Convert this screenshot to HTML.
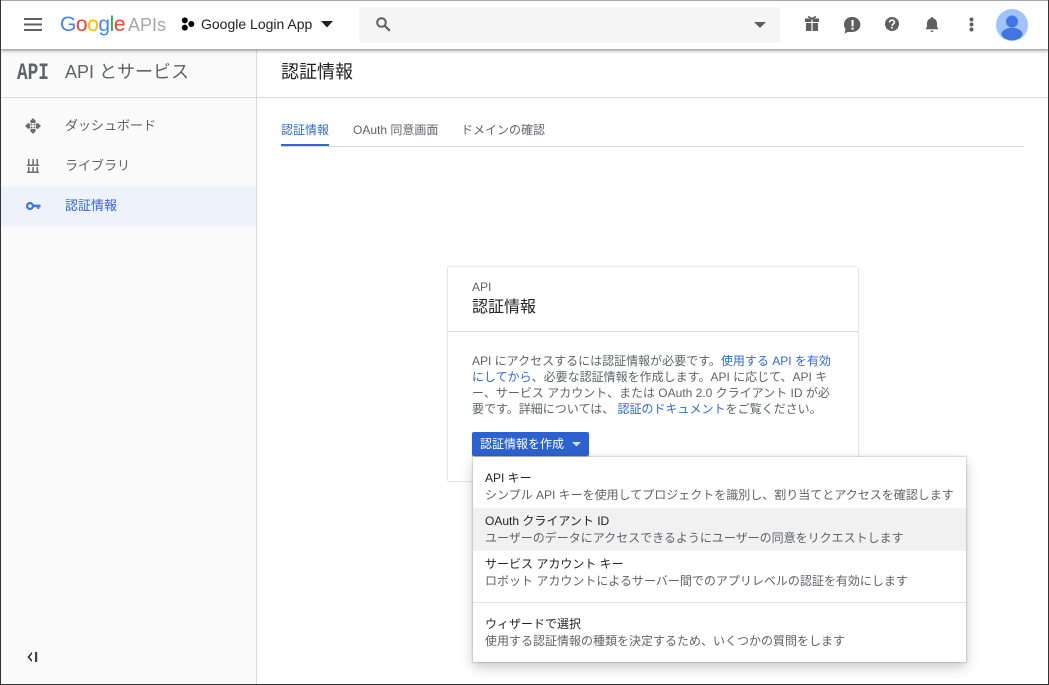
<!DOCTYPE html>
<html lang="ja"><head><meta charset="utf-8"><title>認証情報</title>
<style>
*{box-sizing:border-box}
html,body{margin:0;padding:0;width:1049px;height:685px;overflow:hidden;background:#fff}
body{font-family:"Liberation Sans","Noto Sans CJK JP",sans-serif;position:relative;color:#212121}
.a{position:absolute;white-space:nowrap}
svg{position:absolute;display:block}
.t{font-size:12px;line-height:16px;color:#000000de}
.s{font-size:12px;line-height:16px;color:#5f6368}
a{color:#3367d6;text-decoration:none}
</style></head><body>
<!-- sidebar -->
<div class="a" style="left:0;top:50px;width:257px;height:635px;background:#fafafa;border-right:1px solid #dadada"></div>
<div class="a" style="left:0;top:97px;width:1049px;height:1px;background:#dadada"></div>
<!-- header -->
<div class="a" style="left:0;top:0;width:1049px;height:49px;background:#fff;box-shadow:0 1px 4px rgba(0,0,0,.55)"></div>
<svg style="left:24px;top:18px" width="19" height="13"><path d="M0 0h18v2H0zM0 5.500h18v2H0zM0 11h18v2H0z" fill="#5f5f5f"/></svg>
<div class="a" style="left:60px;top:10px;font-size:21px;line-height:30px;letter-spacing:-.45px"><span style="color:#4285f4">G</span><span style="color:#ea4335">o</span><span style="color:#fbbc05">o</span><span style="color:#4285f4">g</span><span style="color:#34a853">l</span><span style="color:#ea4335">e</span><span style="color:#a6a6a6;margin-left:3px;font-size:18px;letter-spacing:0">APIs</span></div>
<svg style="left:181px;top:17px" width="14" height="14"><circle cx="3.800" cy="3.400" r="3" fill="#000"/><circle cx="3.800" cy="10.600" r="3" fill="#000"/><circle cx="10.300" cy="7" r="3" fill="#000"/></svg>
<div class="a" style="left:201px;top:15px;font-size:14px;line-height:18px;color:#212121">Google Login App</div>
<svg style="left:321px;top:21px" width="12" height="7"><path d="M0 0h12L6 6.500z" fill="#212121"/></svg>
<div class="a" style="left:359px;top:7px;width:421px;height:36px;background:#f5f5f5;border-radius:2px"></div>
<svg style="left:375px;top:16px" width="17" height="17" viewBox="0 0 17 17"><circle cx="6.500" cy="6.500" r="4.300" fill="none" stroke="#5f5f5f" stroke-width="2"/><path d="M9.800 9.800l5 5" stroke="#5f5f5f" stroke-width="2.200"/></svg>
<svg style="left:754px;top:22px" width="12" height="6"><path d="M0 0h12L6 6z" fill="#5f5f5f"/></svg>
<!-- gift -->
<svg style="left:804px;top:16px" width="16" height="16" viewBox="0 0 16 16" fill="#5f5f5f"><path d="M1 2.500h6.400v3.500H1zM8.600 2.500H15v3.500H8.600zM2 7h5.400v8H2zM8.600 7H14v8H8.600z"/><path d="M4 0.500l4 2.200 4-2.200" fill="none" stroke="#5f5f5f" stroke-width="1.600"/></svg>
<!-- feedback -->
<svg style="left:844px;top:17px" width="17" height="17" viewBox="0 0 17 17"><path d="M8.500 0a7.900 7.500 0 0 1 0 15H3.500L0.500 16.800 1.600 12A7.900 7.500 0 0 1 8.500 0z" fill="#5f5f5f"/><path d="M7.500 3h2.100v6.200H7.500zM7.500 10.500h2.100v2.100H7.500z" fill="#fff"/></svg>
<!-- help -->
<svg style="left:885px;top:17px" width="14" height="14" viewBox="0 0 14 14"><circle cx="7" cy="7" r="7" fill="#5f5f5f"/><path d="M4.500 5.400A2.500 2.300 0 0 1 9.500 5.300c0 1.700-2.500 1.700-2.500 3.500" fill="none" stroke="#fff" stroke-width="1.600"/><path d="M6.100 9.800h1.800v1.700H6.100z" fill="#fff"/></svg>
<!-- bell -->
<svg style="left:925px;top:16px" width="14" height="17" viewBox="0 0 14 17" fill="#5f5f5f"><path d="M7 1a1.200 1.200 0 0 1 1.200 1.200A5 5 0 0 1 12 7v4l1.300 1.600v.7H.7v-.7L2 11V7a5 5 0 0 1 3.800-4.800A1.200 1.200 0 0 1 7 1zM5.500 14.500h3a1.500 1.500 0 0 1-3 0z"/></svg>
<svg style="left:969px;top:17px" width="5" height="15" fill="#5f5f5f"><circle cx="2.500" cy="2.500" r="2"/><circle cx="2.500" cy="7.500" r="2"/><circle cx="2.500" cy="12.500" r="2"/></svg>
<svg style="left:996px;top:9px" width="32" height="32" viewBox="0 0 32 32"><circle cx="16" cy="16" r="16" fill="#a0c3ff"/><g fill="#4375e0"><circle cx="16" cy="12.500" r="6"/><ellipse cx="16" cy="25" rx="10.500" ry="6.200"/></g></svg>

<!-- sidebar content -->
<div class="a" style="left:17px;top:60px;font-family:'Liberation Mono',monospace;font-weight:700;font-size:23px;line-height:26px;color:#5f6368;transform:scaleX(.77);transform-origin:left top">API</div>
<div class="a" style="left:65px;top:60px;font-size:18px;line-height:24px;color:#5f6368">API とサービス</div>
<svg style="left:25px;top:118px" width="16" height="16" viewBox="0 0 16 16" fill="#6e6e6e"><path d="M8 0l3 3.200-.8 1.800H5.800L5 3.200zM8 16l-3-3.200.8-1.800h4.400l.8 1.800zM0 8l3.200-3 1.800.8v4.400l-1.800.8zM16 8l-3.200 3-1.800-.8V5.800l1.800-.8z"/><circle cx="6.500" cy="6.500" r="1"/><circle cx="9.500" cy="6.500" r="1"/><circle cx="6.500" cy="9.500" r="1"/><circle cx="9.500" cy="9.500" r="1"/></svg>
<div class="a" style="left:65px;top:116px;font-size:13px;line-height:20px;color:#5f6368">ダッシュボード</div>
<svg style="left:27px;top:159px" width="13" height="14" fill="#6e6e6e"><path d="M0 5.500h12v1.500H0zM0 12.500h12V14H0zM1 0h1.500v5.500H1zM5.300 0h1.500v5.500H5.300zM9.500 0H11v5.500H9.500zM1 8h1.500v4.500H1zM5.300 8h1.500v4.500H5.300zM9.500 8H11v4.500H9.500z"/></svg>
<div class="a" style="left:65px;top:156px;font-size:13px;line-height:20px;color:#5f6368">ライブラリ</div>
<div class="a" style="left:1px;top:186px;width:255px;height:40px;background:#edf2fb"></div>
<svg style="left:26px;top:202px" width="15" height="8" viewBox="0 0 15 8"><circle cx="4" cy="4" r="2.900" fill="none" stroke="#3d74e0" stroke-width="2.200"/><path d="M6.500 2.600H14.500v2.600h-1.200V7h-2V5.200H6.500z" fill="#3d74e0"/></svg>
<div class="a" style="left:65px;top:196px;font-size:13px;line-height:20px;color:#3367d6">認証情報</div>
<svg style="left:27px;top:652px" width="11" height="10" fill="#212121"><path d="M5 0L.500 5 5 10V8L2.500 5 5 2z"/><path d="M8 0h2.200v10H8z" fill="#424242"/></svg>

<!-- main head -->
<div class="a" style="left:281px;top:60px;font-size:18px;line-height:24px;color:#212121">認証情報</div>
<div class="a" style="left:281px;top:121px;font-size:12px;line-height:18px;color:#3367d6">認証情報</div>
<div class="a" style="left:353px;top:121px;font-size:12px;line-height:18px;color:#5f6368">OAuth 同意画面</div>
<div class="a" style="left:461px;top:121px;font-size:12px;line-height:18px;color:#5f6368">ドメインの確認</div>
<div class="a" style="left:281px;top:146px;width:743px;height:1px;background:#d6d6d6"></div>
<div class="a" style="left:281px;top:144px;width:48px;height:2px;background:#3367d6"></div>

<!-- card -->
<div class="a" style="left:448px;top:267px;width:410px;height:214px;background:#fff;box-shadow:0 0 2px rgba(0,0,0,.3)"></div>
<div class="a" style="left:472px;top:280px;font-size:12px;line-height:15px;color:#5f6368">API</div>
<div class="a" style="left:472px;top:297px;font-size:16px;line-height:21px;color:#212121">認証情報</div>
<div class="a" style="left:448px;top:331px;width:410px;height:1px;background:#dadada"></div>
<div class="a s" style="left:472px;top:353px">API にアクセスするには認証情報が必要です。<a href="#">使用する API を有効</a></div>
<div class="a s" style="left:472px;top:369px"><a href="#">にしてから</a>、必要な認証情報を作成します。API に応じて、API キ</div>
<div class="a s" style="left:472px;top:385px">ー、サービス アカウント、または OAuth 2.0 クライアント ID が必</div>
<div class="a s" style="left:472px;top:401px">要です。詳細については、 <a href="#">認証のドキュメント</a>をご覧ください。</div>
<div class="a" style="left:472px;top:432px;width:117px;height:24px;background:#2c62cf;border-radius:2px;box-shadow:0 1px 1px rgba(0,0,0,.25)"></div>
<div class="a" style="left:480px;top:435px;font-size:12px;line-height:18px;color:#fff">認証情報を作成</div>
<svg style="left:572px;top:442px" width="9" height="5"><path d="M0 0h9L4.500 4.500z" fill="#d5dff5"/></svg>

<!-- menu -->
<div class="a" style="left:473px;top:457px;width:493px;height:205px;background:#fff;box-shadow:0 0 1px 1px rgba(0,0,0,.14),0 5px 12px rgba(0,0,0,.22)"></div>
<div class="a" style="left:473px;top:508px;width:493px;height:43px;background:#f1f1f1"></div>
<div class="a" style="left:473px;top:602px;width:493px;height:1px;background:#e2e2e2"></div>
<div class="a t" style="left:485px;top:470px">API キー</div>
<div class="a s" style="left:485px;top:487px">シンプル API キーを使用してプロジェクトを識別し、割り当てとアクセスを確認します</div>
<div class="a t" style="left:485px;top:513px">OAuth クライアント ID</div>
<div class="a s" style="left:485px;top:530px">ユーザーのデータにアクセスできるようにユーザーの同意をリクエストします</div>
<div class="a t" style="left:485px;top:556px">サービス アカウント キー</div>
<div class="a s" style="left:485px;top:573px">ロボット アカウントによるサーバー間でのアプリレベルの認証を有効にします</div>
<div class="a t" style="left:485px;top:616px">ウィザードで選択</div>
<div class="a s" style="left:485px;top:633px">使用する認証情報の種類を決定するため、いくつかの質問をします</div>

<!-- window frame -->
<div class="a" style="left:0;top:0;width:1049px;height:1px;background:#a8a8a8"></div>
<div class="a" style="left:0;top:0;width:1px;height:685px;background:#333"></div>
<div class="a" style="left:1048px;top:0;width:1px;height:685px;background:#333"></div>
<div class="a" style="left:0;top:684px;width:1049px;height:1px;background:#333"></div>
</body></html>
